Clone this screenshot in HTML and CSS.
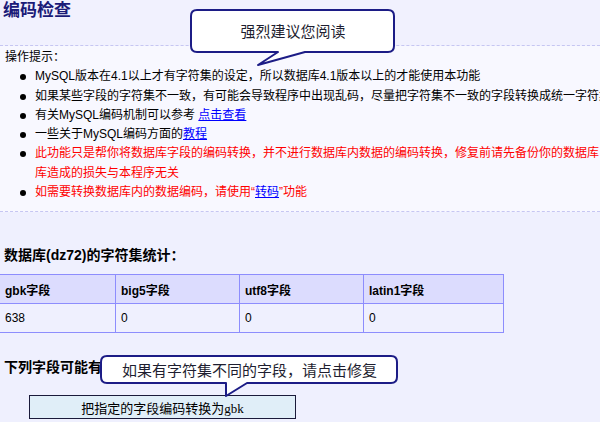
FILE: index.html
```html
<!DOCTYPE html>
<html lang="zh-CN">
<head>
<meta charset="utf-8">
<title>编码检查</title>
<link rel="stylesheet" href="styles.css">
</head>
<body>
<div class="page">
  <div class="header">
    <h1 class="title">编码检查</h1>
  </div>
  <div class="tips">
    <div class="tips-head">操作提示：</div>
    <ul class="tips-list">
      <li>MySQL版本在4.1以上才有字符集的设定，所以数据库4.1版本以上的才能使用本功能</li>
      <li>如果某些字段的字符集不一致，有可能会导致程序中出现乱码，尽量把字符集不一致的字段转换成统一字符集</li>
      <li>有关MySQL编码机制可以参考 <a href="#">点击查看</a></li>
      <li>一些关于MySQL编码方面的<a href="#">教程</a></li>
      <li class="warn">此功能只是帮你将数据库字段的编码转换，并不进行数据库内数据的编码转换，修复前请先备份你的数据库<br>库造成的损失与本程序无关</li>
      <li class="warn">如需要转换数据库内的数据编码，请使用“<a href="#">转码</a>”功能</li>
    </ul>
  </div>

  <h2 class="section-title stats-title">数据库(dz72)的字符集统计：</h2>
  <table class="stats">
    <thead>
      <tr>
        <th class="c1">gbk字段</th>
        <th class="c2">big5字段</th>
        <th class="c3">utf8字段</th>
        <th class="c4">latin1字段</th>
      </tr>
    </thead>
    <tbody>
      <tr>
        <td>638</td>
        <td>0</td>
        <td>0</td>
        <td>0</td>
      </tr>
    </tbody>
  </table>

  <h2 class="section-title fix-title">下列字段可能有字符集不一致：</h2>
  <button class="convert-btn" type="button">把指定的字段编码转换为gbk</button>

  <div class="callout callout-read">
    <svg class="callout-shape" width="206" height="58" viewBox="0 0 206 58">
      <path d="M7,1 H198 Q204,1 204,7 V37 Q204,43 198,43 H115 L68,56 L88,43 H7 Q1,43 1,37 V7 Q1,1 7,1 Z" fill="#ffffff" stroke="#1c1c86" stroke-width="2" stroke-linejoin="round"/>
    </svg>
    <span class="callout-text">强烈建议您阅读</span>
  </div>

  <div class="callout callout-fix">
    <svg class="callout-shape" width="299" height="44" viewBox="0 0 299 44">
      <path d="M7,1 H291 Q297,1 297,7 V22 Q297,28 291,28 H147 L126,41 V28 H7 Q1,28 1,22 V7 Q1,1 7,1 Z" fill="#ffffff" stroke="#1c1c86" stroke-width="2" stroke-linejoin="round"/>
    </svg>
    <span class="callout-text">如果有字符集不同的字段，请点击修复</span>
  </div>
</div>
</body>
</html>
```

FILE: styles.css
```css
html, body {
  margin: 0;
  padding: 0;
  overflow: hidden;
  background: #eff0fe;
}

body {
  font-family: "Liberation Sans", "Noto Sans CJK SC", sans-serif;
  font-size: 12px;
  color: #000000;
}

.page {
  position: relative;
  width: 600px;
  height: 422px;
  overflow: hidden;
}

.header {
  background: #f1f1fe;
  border-bottom: 1px dashed #c6c6f2;
  box-sizing: border-box;
  height: 46px;
}

.title {
  margin: 0;
  padding: 1px 0 0 3px;
  font-size: 17px;
  line-height: 20px;
  font-weight: bold;
  color: #1b1b78;
}

.tips {
  background: #f8f8ff;
  border-bottom: 1px dashed #c6c6f2;
  padding: 2px 0 9px 0;
}

.tips-head {
  padding-left: 5px;
  line-height: 19.3px;
}

.tips-list {
  margin: 0;
  padding: 0 0 0 35px;
  list-style: none;
}

.tips-list li {
  position: relative;
  line-height: 19.3px;
  white-space: nowrap;
}

.tips-list li::before {
  content: "";
  position: absolute;
  left: -15px;
  top: 7px;
  width: 6px;
  height: 6px;
  border-radius: 50%;
  background: #000000;
}

.warn {
  color: #ff0000;
}

a {
  color: #0000ff;
  text-decoration: underline;
}

.section-title {
  margin: 0;
  padding-left: 4px;
  font-size: 14px;
  line-height: 20px;
  font-weight: bold;
}

.stats-title {
  margin-top: 33px;
}

.stats {
  margin-top: 9px;
  margin-left: -1px;
  border-collapse: collapse;
  width: 504px;
  table-layout: fixed;
}

.stats th,
.stats td {
  border: 1px solid #8d8dfd;
  height: 29px;
  padding: 0 0 0 5px;
  text-align: left;
  font-size: 12px;
  box-sizing: border-box;
}

.stats th {
  background: #dcdcfe;
  font-weight: bold;
}

.stats td {
  background: #eff0fe;
  font-weight: normal;
}

.stats .c1 { width: 116px; }
.stats .c2 { width: 124px; }
.stats .c3 { width: 124px; }
.stats .c4 { width: 140px; }

.fix-title {
  margin-top: 24px;
}

.convert-btn {
  display: block;
  margin: 18px 0 0 29px;
  width: 267px;
  height: 24px;
  padding: 0;
  background: #e0eef8;
  border: 1px solid #1a1a3a;
  font-family: "Liberation Serif", "Noto Sans CJK SC", serif;
  font-size: 13px;
  color: #000000;
  text-align: center;
}

.callout {
  position: absolute;
}

.callout-shape {
  position: absolute;
  left: 0;
  top: 0;
  display: block;
}

.callout-text {
  position: absolute;
  left: 0;
  right: 0;
  text-align: center;
  font-family: "Noto Sans CJK SC", "Liberation Sans", sans-serif;
  font-size: 15px;
  color: #1e1e30;
}

.callout-read {
  left: 190px;
  top: 9px;
  width: 206px;
  height: 58px;
}

.callout-read .callout-text {
  top: 10px;
  width: 206px;
  line-height: 24px;
}

.callout-fix {
  left: 100px;
  top: 355px;
  width: 299px;
  height: 44px;
}

.callout-fix .callout-text {
  top: 2px;
  width: 299px;
  line-height: 25px;
}
```
